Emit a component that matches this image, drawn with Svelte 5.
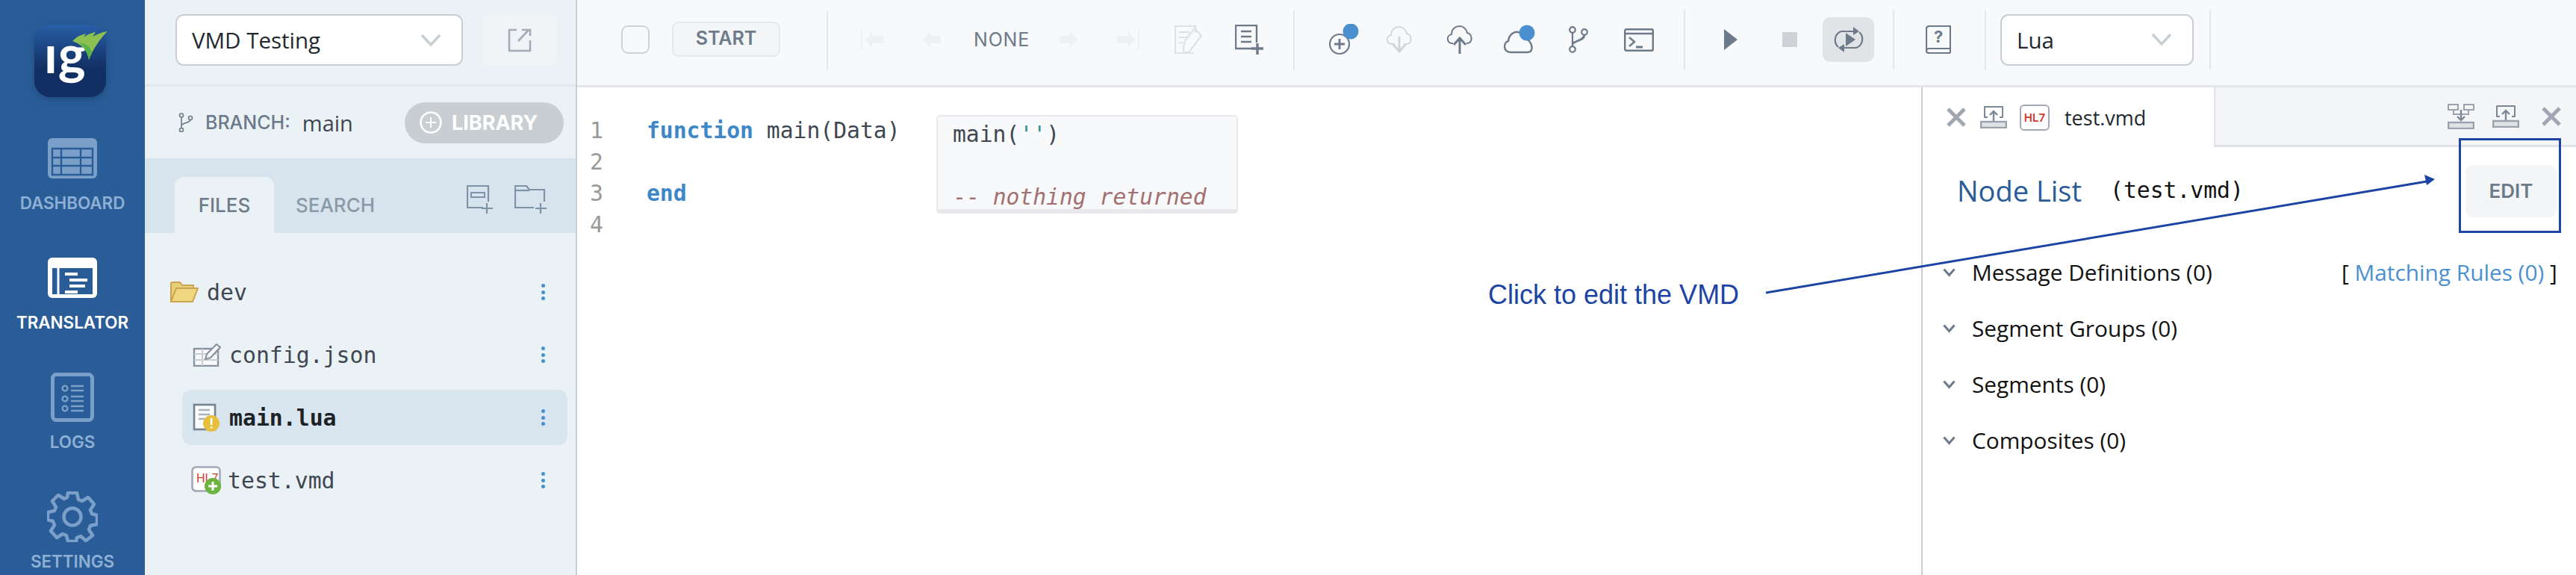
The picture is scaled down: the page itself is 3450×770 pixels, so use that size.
<script>
  const sections = [
    { name: 'Message Definitions (0)', rules: true },
    { name: 'Segment Groups (0)' },
    { name: 'Segments (0)' },
    { name: 'Composites (0)' }
  ];
</script>

<div class="app">
  <nav class="nav">
    <svg class="logo" width="110" height="120" viewBox="0 -10 110 120">
      <defs>
        <linearGradient id="lg" x1="0" y1="0" x2="0" y2="1">
          <stop offset="0" stop-color="#275fa6" />
          <stop offset="0.6" stop-color="#122f63" />
          <stop offset="1" stop-color="#122f63" />
        </linearGradient>
      </defs>
      <rect x="0" y="0" width="96" height="97" rx="21" fill="url(#lg)" />
      <text x="13" y="65" class="logotext">ıg</text>
      <path d="M51 22 C58 15 62 14 69 12 L66 17 C71 13 76 11 82 10 L78 16 C84 13 90 10 98 9 C88 19 80 30 73 47 C71 34 63 26 51 22 Z" fill="#8cc152" />
      <path d="M60 24 C68 25 74 28 77 36 L73 47 C71 34 65 28 60 24 Z" fill="#58b14b" />
    </svg>

    <div class="nav-item">
      <div class="nav-ico">
        <svg width="66" height="54" viewBox="0 0 66 54">
          <rect width="66" height="54" rx="6" fill="#7aa0c9" />
          <path d="M6 14H60V49H6Z M6 26H60 M6 37H60 M18 14V49 M44 14V49" fill="none" stroke="#2a5d98" stroke-width="2.4" />
        </svg>
      </div>
      <span>DASHBOARD</span>
    </div>
    <div class="nav-item active">
      <div class="nav-ico">
        <svg width="66" height="54" viewBox="0 0 66 54">
          <rect width="66" height="54" rx="6" fill="#fff" />
          <rect x="6" y="14" width="54" height="35" fill="#2a5d98" />
          <path d="M14 14V49" stroke="#fff" stroke-width="3" />
          <path d="M23 22H40 M29 30H53 M29 38H50 M23 46H40" stroke="#fff" stroke-width="4" />
        </svg>
      </div>
      <span>TRANSLATOR</span>
    </div>
    <div class="nav-item">
      <div class="nav-ico">
        <svg width="58" height="66" viewBox="0 0 58 66">
          <rect x="2.500" y="2.500" width="53" height="61" rx="5" fill="none" stroke="#7aa0c9" stroke-width="5" />
          <g fill="none" stroke="#7aa0c9" stroke-width="2.4">
            <circle cx="19" cy="21" r="3.4" /><circle cx="19" cy="35" r="3.4" /><circle cx="19" cy="48" r="3.4" />
            <path d="M27 18H44 M27 24H44 M27 32H44 M27 38H44 M27 45H44 M27 51H44" />
          </g>
        </svg>
      </div>
      <span>LOGS</span>
    </div>
    <div class="nav-item">
      <div class="nav-ico">
        <svg width="68" height="68" viewBox="-34 -34 68 68">
          <circle r="11.5" fill="none" stroke="#7aa0c9" stroke-width="4.5" />
          <path d="M-6-32H6L8-23 13-21 21-26 29-17 24-9 26-4 33-2V10L24 12 22 17 27 25 18 32 11 26 6 28 5 33H-6L-8 25-13 23-21 28-29 19-24 11-26 6-33 4V-6L-24-8-22-13-27-21-19-29-11-24-7-26Z" fill="none" stroke="#7aa0c9" stroke-width="4.5" stroke-linejoin="round" />
        </svg>
      </div>
      <span>SETTINGS</span>
    </div>
  </nav>

  <aside class="side">
    <div class="side-top">
      <div class="select vmd">
        <span>VMD Testing</span>
        <svg width="28" height="18" viewBox="0 0 28 18"><path d="M2 2 L14 15 L26 2" fill="none" stroke="#c9ced3" stroke-width="3.4" /></svg>
      </div>
      <div class="open-btn">
        <svg width="32" height="32" viewBox="0 0 32 32" fill="none" stroke="#a4adb6" stroke-width="2.6">
          <path d="M12 2H2V30H30V16" stroke-linejoin="round" />
          <path d="M14 17L28 2 M19 2H30V10" />
        </svg>
      </div>
    </div>

    <div class="branch-row">
      <svg class="branch-ico" width="20" height="26" viewBox="0 0 20 26" fill="none" stroke="#6c7a89" stroke-width="1.6">
        <circle cx="4" cy="3.5" r="2.5" /><circle cx="16" cy="7" r="2.5" /><circle cx="4" cy="23" r="2.5" />
        <path d="M4 6V20 M4 17C6 13 15 14 16 9.5" />
      </svg>
      <span class="branch-label">BRANCH:</span>
      <span class="branch-name">main</span>
      <div class="library">
        <svg width="30" height="30" viewBox="0 0 30 30" fill="none" stroke="#fff" stroke-width="2.6">
          <circle cx="15" cy="15" r="13.5" /><path d="M15 8V22 M8 15H22" stroke-width="2" />
        </svg>
        <span>LIBRARY</span>
      </div>
    </div>

    <div class="tabs">
      <div class="tab on">FILES</div>
      <div class="tab">SEARCH</div>
      <svg class="add-file" width="36" height="38" viewBox="0 0 36 38" fill="none" stroke="#7f93a8" stroke-width="2.2">
        <path d="M22 30H1V1H29V22" />
        <path d="M6 10H24V16H6Z" stroke-width="2" />
        <path d="M27 24V38 M20 31H35" />
      </svg>
      <svg class="add-folder" width="44" height="38" viewBox="0 0 44 38" fill="none" stroke="#7f93a8" stroke-width="2.2">
        <path d="M26 30H1V1H16L20 6H40V22" /><path d="M1 7H20" />
        <path d="M35 24V38 M28 31H43" />
      </svg>
    </div>

    <div class="tree">
      <div class="row dev">
        <svg class="r-dev" width="38" height="28" viewBox="0 0 38 28">
          <path d="M1 27V3Q1 1 3 1H13L16 5H31V9H9L1 27Z" fill="#e8cf7c" stroke="#c9a652" stroke-width="2" />
          <path d="M8 9H37L30 27H1Z" fill="#f0d67f" stroke="#c9a652" stroke-width="2" />
        </svg>
        <span class="fname devname">dev</span>
        <span class="dots"><i></i><i></i><i></i></span>
      </div>
      <div class="row">
        <svg class="r-ico" width="38" height="32" viewBox="0 0 38 32">
          <rect x="2" y="8" width="32" height="23" fill="#f7f8f9" stroke="#8592a0" stroke-width="2.4" />
          <path d="M2 15H34 M2 23H34 M13 8V31" stroke="#c9ced4" stroke-width="2" />
          <path d="M17 22L19 15 32 2 37 6 24 20Z" fill="#f7f8f9" stroke="#8592a0" stroke-width="2.2" stroke-linejoin="round" />
        </svg>
        <span class="fname">config.json</span>
        <span class="dots"><i></i><i></i><i></i></span>
      </div>
      <div class="row sel">
        <svg class="r-ico" width="38" height="38" viewBox="0 0 38 38">
          <rect x="2" y="2" width="28" height="33" fill="#fafbfc" stroke="#76838f" stroke-width="2.6" />
          <path d="M8 9H23 M8 15H23 M8 21H19" stroke="#aab2ba" stroke-width="2.4" />
          <circle cx="25" cy="27" r="11" fill="#e6bf3c" />
          <rect x="23.8" y="20" width="2.6" height="9" fill="#fff" /><rect x="23.8" y="31" width="2.6" height="2.6" fill="#fff" />
        </svg>
        <span class="fname strong">main.lua</span>
        <span class="dots"><i></i><i></i><i></i></span>
      </div>
      <div class="row">
        <svg class="r-ico wide" width="40" height="38" viewBox="0 0 40 38">
          <rect x="1.5" y="1.5" width="37" height="32" rx="5" fill="#fff" stroke="#a2a9b6" stroke-width="2.6" />
          <text x="7" y="22" class="hl">HL7</text>
          <circle cx="29" cy="27" r="11" fill="#6db33f" />
          <path d="M29 21V33 M23 27H35" stroke="#fff" stroke-width="3" />
        </svg>
        <span class="fname">test.vmd</span>
        <span class="dots"><i></i><i></i><i></i></span>
      </div>
    </div>
  </aside>

  <main class="main">
    <div class="toolbar">
      <div class="check"></div>
      <div class="start">START</div>
      <div class="divider d1"></div>

      <svg class="m-first" width="30" height="26" viewBox="0 0 30 26" fill="#eef0f2"><rect width="2" height="26" /><path d="M6 13L15 2V8H30V18H15V24Z" /></svg>
      <svg class="m-prev" width="24" height="26" viewBox="0 0 24 26" fill="#eef0f2"><path d="M0 13L10 2V8H24V18H10V24Z" /></svg>
      <span class="none">NONE</span>
      <svg class="m-next" width="24" height="26" viewBox="0 0 24 26" fill="#eef0f2"><path d="M24 13L14 2V8H0V18H14V24Z" /></svg>
      <svg class="m-last" width="30" height="26" viewBox="0 0 30 26" fill="#eef0f2"><rect x="28" width="2" height="26" /><path d="M24 13L15 2V8H0V18H15V24Z" /></svg>

      <svg class="m-note" width="38" height="38" viewBox="0 0 38 38" fill="none" stroke="#dfe2e5" stroke-width="2.2">
        <path d="M28 10V1H1V37H26" /><path d="M6 9H20 M6 16H16 M6 23H12" />
        <path d="M12 28L15 19 27 4 36 14 19 36 12 36Z" stroke-linejoin="round" />
      </svg>
      <svg class="m-new" width="38" height="40" viewBox="0 0 38 40" fill="none" stroke="#6c7a89" stroke-width="2.4">
        <path d="M24 32H1V1H29V24" /><path d="M8 9H22 M8 16H22 M8 23H22" />
        <path d="M30 25V40 M22 32H38" stroke-width="3.4" />
      </svg>
      <div class="divider d2"></div>

      <svg class="m-add" width="40" height="42" viewBox="0 0 40 42" fill="none" stroke="#6c7a89" stroke-width="2.2">
        <circle cx="14" cy="27" r="13" /><path d="M14 20V34 M7 27H21" stroke-width="2.8" />
        <circle cx="29" cy="10" r="10.5" fill="#4a8fcf" stroke="none" />
      </svg>
      <svg class="m-cdown" width="34" height="36" viewBox="0 0 34 36" fill="none" stroke="#d2d6da" stroke-width="2">
        <path d="M11 24H7C-1 24-1 13 6 12 6 4 12 1 17 1 22 1 26 5 27 10 34 11 35 24 27 24H23" />
        <path d="M17 14V34 M9 25L17 34 25 25" stroke-width="3" />
      </svg>
      <svg class="m-cup" width="34" height="38" viewBox="0 0 34 38" fill="none" stroke="#6c7a89" stroke-width="2">
        <path d="M8 24H7C-1 24-1 13 6 12 6 4 12 1 17 1 22 1 26 5 27 10 34 11 35 24 27 24H26" />
        <path d="M17 38V17 M9 26L17 17 25 26" stroke-width="3" />
      </svg>
      <svg class="m-csync" width="44" height="40" viewBox="0 0 44 40" fill="none" stroke="#6c7a89" stroke-width="2.4">
        <path d="M10 37H9C-1 37-1 24 6 22 7 13 14 9 19 10 24 11 28 14 29 19 37 20 42 37 32 37Z" />
        <circle cx="31" cy="11" r="10.5" fill="#4a8fcf" stroke="none" />
      </svg>
      <svg class="m-branch" width="26" height="36" viewBox="0 0 26 36" fill="none" stroke="#6c7a89" stroke-width="2.2">
        <circle cx="5" cy="5" r="3.8" /><circle cx="21" cy="8" r="3.8" /><circle cx="5" cy="31" r="3.8" />
        <path d="M5 9V27" /><path d="M5 24C8 19 20 20 21 12" stroke-width="2.8" />
      </svg>
      <svg class="m-term" width="40" height="31" viewBox="0 0 40 31" fill="none" stroke="#6c7a89" stroke-width="2.4">
        <rect x="1.2" y="1.2" width="37.6" height="28.6" rx="2" /><path d="M1 7H39" />
        <path d="M7 12L14 18 7 24" stroke-width="2.4" /><path d="M16 25H25" stroke-width="3" />
      </svg>
      <div class="divider d3"></div>

      <svg class="m-play" width="18" height="28" viewBox="0 0 18 28" fill="#6c7a89"><path d="M0 0L18 14 0 28Z" /></svg>
      <div class="stop"></div>
      <div class="loop">
        <svg width="42" height="38" viewBox="0 0 42 38" fill="none" stroke="#6c7a89" stroke-width="2.2">
          <path d="M7 29C0 23 2 11 11 8H28" /><path d="M35 9C42 15 40 27 31 30H14" />
          <path d="M27 2L35 8 27 13Z" fill="#6c7a89" stroke="none" /><path d="M15 25L7 30 15 36Z" fill="#6c7a89" stroke="none" />
          <path d="M17 10L30 19 17 28Z" fill="#6c7a89" stroke="none" />
        </svg>
      </div>
      <div class="divider d4"></div>

      <svg class="m-help" width="34" height="38" viewBox="0 0 34 38" fill="none" stroke="#6c7a89" stroke-width="2.2">
        <path d="M33 31H5C2.500 31 1 32.500 1 34.500 1 36 2.500 37 5 37H33M33 37V1H5C2.500 1 1 2.500 1 5V34" />
        <text x="11" y="23" class="q">?</text>
      </svg>
      <div class="divider d5"></div>
      <div class="select lua">
        <span>Lua</span>
        <svg width="28" height="18" viewBox="0 0 28 18"><path d="M2 2 L14 15 L26 2" fill="none" stroke="#c9ced3" stroke-width="3.4" /></svg>
      </div>
      <div class="divider d6"></div>
    </div>

    <div class="body">
      <div class="editor">
        <div class="code">
          <div class="nums"><div>1</div><div>2</div><div>3</div><div>4</div></div>
          <div class="src">
            <div><span class="kw">function</span> main(Data)</div>
            <div>&nbsp;</div>
            <div><span class="kw">end</span></div>
          </div>
          <div class="result">
            <div>main(<span class="str">''</span>)</div>
            <div>&nbsp;</div>
            <div class="cmt">-- <em>nothing returned</em></div>
          </div>
        </div>
      </div>

      <section class="right">
        <div class="rtabs">
          <div class="rtab">
            <svg class="x" width="26" height="26" viewBox="0 0 26 26"><path d="M2 2L24 24 M24 2L2 24" stroke="#a0a7b2" stroke-width="5" /></svg>
            <svg width="36" height="30" viewBox="0 0 36 30" class="up" fill="none" stroke="#7c8894" stroke-width="2">
              <path d="M10 15H6V1H30V15H26" stroke-linejoin="round" /><path d="M18 20V8 M13 12L18 7 23 12" stroke-width="2.4" />
              <rect x="1.2" y="21" width="33.6" height="8" fill="#e0e3e6" stroke="#9aa3ad" stroke-width="2.4" />
            </svg>
            <div class="hlbox">HL7</div>
            <span class="rtitle">test.vmd</span>
          </div>
          <div class="rbar">
            <svg width="36" height="34" viewBox="0 0 36 34" fill="none" stroke="#9aa3ad" stroke-width="2">
              <path d="M1 1H14V8H1Z M22 1H35V8H22Z M8 8V14H28V8" /><path d="M18 8V22 M13 17L18 22 23 17" stroke="#7c8894" stroke-width="2.4" />
              <rect x="1.2" y="25" width="33.6" height="8" fill="#e0e3e6" stroke-width="2.4" />
            </svg>
            <svg class="up" width="36" height="30" viewBox="0 0 36 30" fill="none" stroke="#7c8894" stroke-width="2">
              <path d="M10 15H6V1H30V15H26" stroke-linejoin="round" /><path d="M18 20V8 M13 12L18 7 23 12" stroke-width="2.4" />
              <rect x="1.2" y="21" width="33.6" height="8" fill="#e0e3e6" stroke="#9aa3ad" stroke-width="2.4" />
            </svg>
            <svg class="x" width="26" height="26" viewBox="0 0 26 26"><path d="M2 2L24 24 M24 2L2 24" stroke="#a0a7b2" stroke-width="5" /></svg>
          </div>
        </div>

        <div class="head">
          <span class="nodelist">Node List</span>
          <span class="nodefile">(test.vmd)</span>
          <div class="edit">EDIT</div>
        </div>

        <div class="sections">
          {#each sections as s}
            <div class="sec">
              <svg width="17" height="12" viewBox="0 0 17 12"><path d="M1.5 1.5L8.5 9.5 15.5 1.5" fill="none" stroke="#6c7a89" stroke-width="3" /></svg>
              <span>{s.name}</span>
              {#if s.rules}
                <span class="rules">[ <a href="#rules">Matching Rules (0)</a> ]</span>
              {/if}
            </div>
          {/each}
        </div>
      </section>
    </div>
  </main>

  <div class="callout-text">Click to edit the VMD</div>
  <div class="callout-box"></div>
  <svg class="callout-arrow" width="910" height="170" viewBox="0 0 910 170">
    <path d="M0 162L885 13" stroke="#1c44a4" stroke-width="3" fill="none" />
    <path d="M896 10L882 4 885 18Z" fill="#1c44a4" />
  </svg>
</div>

<style>
  :global(body) { margin: 0; background: #fff; overflow: hidden; }
  .app {
    position: relative; display: flex; width: 3450px; height: 770px; overflow: hidden;
    font-family: "Open Sans", "Liberation Sans", sans-serif; color: #22282e;
  }

  .nav { width: 194px; flex: none; background: #2a5d98; display: flex; flex-direction: column; }
  .logo { margin: 23px 0 29px 46px; flex: none; filter: drop-shadow(0 3px 6px rgba(15, 40, 80, .35)); }
  .logotext { font: 700 70px "Lato", sans-serif; fill: #fff; letter-spacing: 1px; }
  .nav-item { height: 160px; flex: none; display: flex; flex-direction: column; align-items: center; font: 600 22.4px "Inter", sans-serif; color: #8eb0d4; }
  .nav-ico { height: 80px; display: flex; align-items: center; justify-content: center; flex: none; }
  .nav-item span { line-height: 40px; }
  .nav-item.active { color: #fff; }

  .side { width: 577px; flex: none; background: #ebf2f6; border-right: 2px solid #c9ced4; display: flex; flex-direction: column; }
  .side-top { flex: none; border-bottom: 3px solid #e4e8eb; display: flex; align-items: flex-start; padding: 19px 0 0 41px; height: 94px; }
  .select { box-sizing: border-box; height: 69px; background: #fff; border: 2px solid #c9ced4; border-radius: 11px; display: flex; align-items: center; justify-content: space-between; font-size: 29.5px; padding: 0 27px 0 20px; color: #22282e; }
  .vmd { width: 385px; }
  .open-btn { width: 100px; height: 70px; margin-left: 26px; background: #f0f4f7; border-radius: 10px; display: flex; align-items: center; justify-content: center; }
  .branch-row { height: 96px; flex: none; display: flex; align-items: center; padding-left: 45px; font: 500 25px "Inter", sans-serif; }
  .branch-label { margin-left: 16px; color: #6c7a89; }
  .branch-name { margin-left: 16px; font: 400 29px "Open Sans", sans-serif; color: #3e4751; }
  .library { margin-left: auto; margin-right: 16px; width: 213px; height: 55px; box-sizing: border-box; border-radius: 28px; background: #c9ced3; color: #fff; display: flex; align-items: center; gap: 13px; padding-left: 20px; font: 700 27px "Inter", sans-serif; }

  .tabs { position: relative; height: 100px; flex: none; background: #d8e4ed; display: flex; align-items: flex-end; padding-left: 40px; font: 500 26px "Inter", sans-serif; }
  .tab { height: 75px; width: 133px; box-sizing: border-box; line-height: 76px; text-align: center; color: #8a99a8; border-radius: 12px 12px 0 0; white-space: nowrap; }
  .tab.on { background: #ebf2f6; color: #6c7a89; margin-right: -3px; }
  .tab:not(.on) { width: 170px; }
  .add-file, .add-folder { position: absolute; top: 36px; }
  .add-file { left: 431px; }
  .add-folder { left: 495px; }

  .tree { padding: 42px 0 0 50px; display: flex; flex-direction: column; gap: 10px; }
  .row { height: 74px; display: flex; align-items: center; width: 516px; box-sizing: border-box; border-radius: 12px; padding-left: 14px; position: relative; }
  .row.dev { margin-left: -30px; width: 546px; }
  .row.sel { background: #d9e6f0; }
  .r-dev { flex: none; }
  .devname { margin-left: 10px; }
  .r-ico { flex: none; }
  .wide { margin-left: -2px; margin-right: -2px; }
  .hl { font: 500 16px "Liberation Sans", sans-serif; fill: #d13b2a; }
  .fname { font: 400 29.8px "DejaVu Sans Mono", monospace; color: #3e4751; margin-left: 11px; }
  .strong { font-weight: 700; color: #1d2226; }
  .dots { position: absolute; left: 481px; display: flex; flex-direction: column; gap: 3.5px; }
  .row.dev .dots { left: 511px; }
  .dots i { width: 5px; height: 5px; border-radius: 50%; background: #4a8fcf; }

  .main { flex: 1; min-width: 0; display: flex; flex-direction: column; }
  .toolbar { height: 114px; flex: none; background: #f8f9fb; border-bottom: 3px solid #e4e6e9; display: flex; align-items: center; padding-left: 59px; }
  .toolbar > * { flex: none; }
  .check { width: 38px; height: 38px; box-sizing: border-box; border: 2px solid #cfd3d8; border-radius: 9px; background: #f8f9fb; margin-top: -8px; }
  .start { margin-left: 30px; width: 145px; height: 47px; box-sizing: border-box; border: 2px solid #e6e8eb; background: #f3f5f7; border-radius: 9px; text-align: center; font: 600 25px/41px "Inter", sans-serif; color: #6c7a89; margin-top: -10px; }
  .divider { width: 2px; height: 80px; background: #e6e8eb; margin-top: -6px; }
  .d1 { margin-left: 62px; }
  .d2 { margin-left: 40px; }
  .d3 { margin-left: 40px; }
  .d4 { margin-left: 25px; }
  .d5 { margin-left: 45px; }
  .d6 { margin-left: 21px; }
  .toolbar svg { margin-top: -8px; }
  .m-first { margin-left: 44px; }
  .m-prev { margin-left: 53px; }
  .none { margin-left: 44px; width: 76px; font: 400 25px "Inter", sans-serif; letter-spacing: .8px; color: #6c7a89; margin-top: -8px; white-space: nowrap; }
  .m-next { margin-left: 39px; }
  .m-last { margin-left: 53px; }
  .m-note { margin-left: 47px; }
  .m-new { margin-left: 43px; }
  .m-add { margin-left: 46px; }
  .m-cdown { margin-left: 37px; }
  .m-cup { margin-left: 47px; }
  .m-csync { margin-left: 42px; }
  .m-branch { margin-left: 43px; }
  .m-term { margin-left: 48px; }
  .m-play { margin-left: 52px; }
  .stop { margin-left: 60px; width: 20px; height: 20px; background: #cfd3d8; margin-top: -8px; }
  .loop { margin-left: 34px; width: 69px; height: 60px; border-radius: 10px; background: #e1e4e7; display: flex; align-items: center; justify-content: center; margin-top: -8px; }
  .toolbar .loop svg, .toolbar .lua svg { margin-top: 0; }
  .m-help { margin-left: 42px; }
  .q { font: 700 22px "Inter", sans-serif; fill: #6c7a89; stroke: none; }
  .lua { width: 259px; margin-left: 19px; margin-top: -8px; }

  .body { flex: 1; display: flex; min-height: 0; }
  .editor { flex: 1; min-width: 0; background: #fff; padding-top: 37px; }
  .code { display: flex; font: 400 29.7px/42px "DejaVu Sans Mono", monospace; color: #3e4751; }
  .nums { width: 93px; padding-left: 17px; box-sizing: border-box; color: #999; flex: none; }
  .src { width: 388px; flex: none; }
  .kw { color: #3d87c8; font-weight: 700; }
  .result { width: 404px; height: 132px; box-sizing: border-box; background: #f8f9fb; border: 2px solid #e6e8eb; border-bottom-width: 6px; border-radius: 5px; padding: 3px 0 0 20px; line-height: 42px; }
  .str { color: #35908a; }
  .cmt { color: #a36f70; }

  .right { width: 877px; flex: none; box-sizing: border-box; border-left: 2px solid #c9ced4; display: flex; flex-direction: column; background: #fff; }
  .rtabs { height: 80px; display: flex; flex: none; }
  .rtab { width: 390px; flex: none; display: flex; align-items: center; padding-left: 32px; box-sizing: border-box; }
  .rtab .up { margin-left: 19px; }
  .hlbox { margin-left: 17px; width: 40px; height: 35px; box-sizing: border-box; border: 2px solid #a2a9b6; border-radius: 6px; font: 600 15px/31px "Inter", sans-serif; color: #d13b2a; text-align: center; }
  .rtitle { margin-left: 20px; font-size: 27px; color: #22282e; }
  .rbar { flex: 1; box-sizing: border-box; background: #f4f5f7; border-left: 2px solid #e0e3e6; border-bottom: 3px solid #dfe2e6; display: flex; align-items: center; padding-left: 311px; }
  .rbar .up { margin-left: 24px; }
  .rbar .x { margin-left: 30px; }
  .head { position: relative; height: 130px; box-sizing: border-box; padding-bottom: 15px; flex: none; display: flex; align-items: center; padding-left: 46px; }
  .nodelist { font-size: 38px; color: #2a5d98; }
  .nodefile { margin-left: 38px; font: 400 29.7px "DejaVu Sans Mono", monospace; color: #111; }
  .edit { position: absolute; left: 727px; top: 24px; width: 122px; height: 70px; border-radius: 10px; background: #f3f5f7; font: 600 26px/70px "Inter", sans-serif; color: #6c7a89; text-align: center; }
  .sections { padding-left: 27px; }
  .sec { height: 75px; display: flex; align-items: center; font-size: 29.8px; color: #111; position: relative; }
  .sec span:first-of-type { margin-left: 22px; }
  .rules { position: absolute; left: 534px; margin: 0; white-space: nowrap; }
  .rules a { color: #4a8fcf; text-decoration: none; }

  .callout-text { position: absolute; left: 1993px; top: 374px; font: 400 36px/42px "Liberation Sans", sans-serif; color: #1c44a4; white-space: nowrap; }
  .callout-box { position: absolute; left: 3293px; top: 185px; width: 137px; height: 127px; box-sizing: border-box; border: 3px solid #1c44a4; }
  .callout-arrow { position: absolute; left: 2365px; top: 230px; }
</style>
